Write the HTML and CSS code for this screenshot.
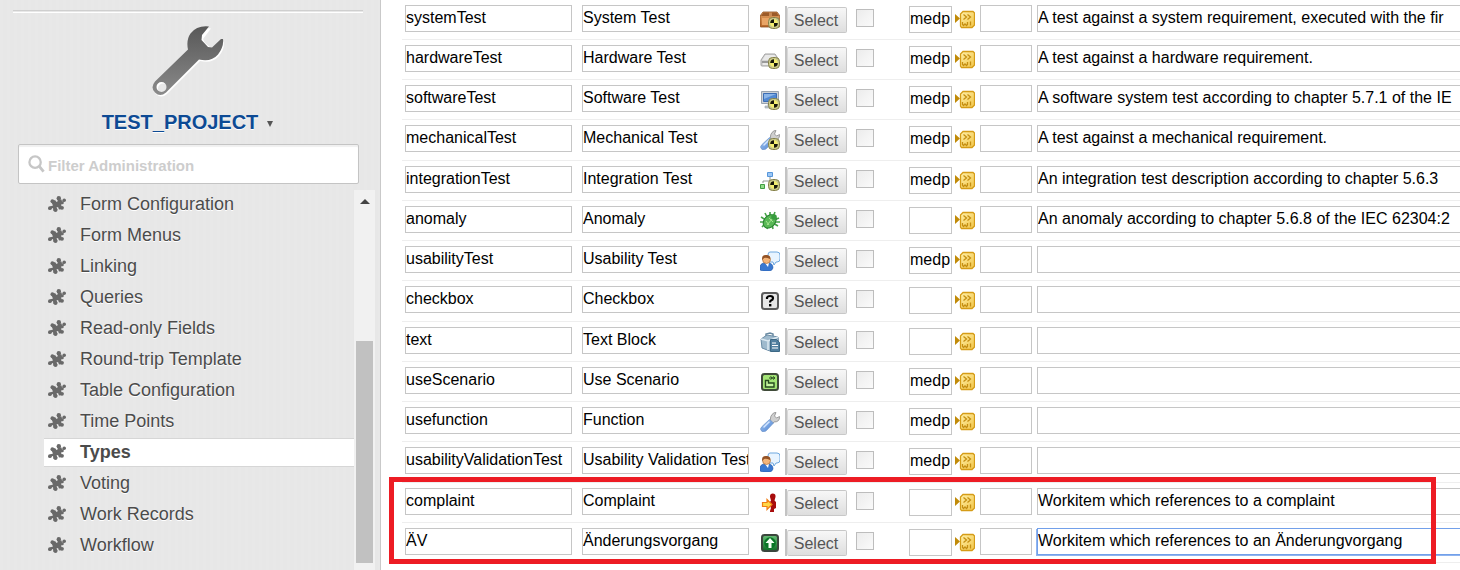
FILE: index.html
```html
<!DOCTYPE html>
<html lang="en">
<head>
<meta charset="utf-8">
<title>Types - TEST_PROJECT</title>
<link rel="stylesheet" href="styles.css">
</head>
<body>
<svg class="defs" aria-hidden="true">
  <defs>
    <linearGradient id="gWrench" x1="0" y1="0" x2="0" y2="1"><stop offset="0" stop-color="#585858"/><stop offset="1" stop-color="#8a8a8a"/></linearGradient>
    <linearGradient id="gGold" x1="0" y1="0" x2="1" y2="1"><stop offset="0" stop-color="#fff0a8"/><stop offset="1" stop-color="#f2c548"/></linearGradient>
    <linearGradient id="gBlue" x1="0" y1="0" x2="1" y2="1"><stop offset="0" stop-color="#a9ccf5"/><stop offset="1" stop-color="#4a7fd0"/></linearGradient>
    <linearGradient id="gBox" x1="0" y1="0" x2="0" y2="1"><stop offset="0" stop-color="#e2a061"/><stop offset="1" stop-color="#b8682a"/></linearGradient>
    <linearGradient id="gGreen" x1="0" y1="0" x2="0" y2="1"><stop offset="0" stop-color="#6cc07a"/><stop offset="1" stop-color="#0d6b25"/></linearGradient>
    <symbol id="puzzle" viewBox="0 0 18 16">
      <g fill="#696969">
        <path d="M3 5.500 7 4 8.500 6 10 5 9 3.500 13.500 3.500 14 5.500 16 4.500 15.500 8 13 8.500 14.500 13 11 13.500 10 11 8.500 11.500 9.500 14 5.500 15 5 12 2 13 2 10.500 5 9.500z"/>
        <circle cx="1.900" cy="12.200" r="1.900"/><circle cx="16.200" cy="4.200" r="1.800"/><circle cx="10.800" cy="2.300" r="2.200"/><circle cx="4.400" cy="5.200" r="1.900"/><circle cx="7.500" cy="14" r="2"/><circle cx="14" cy="11.800" r="1.900"/>
      </g>
    </symbol>
    <symbol id="badge" viewBox="0 0 12 12">
      <rect x=".5" y=".5" width="11" height="11" rx="4" fill="#c9c88c" stroke="#85814a"/>
      <circle cx="6" cy="6" r="3.800" fill="#f4ef70"/>
      <path d="M6 6V2.200A3.800 3.800 0 0 0 2.200 6zM6 6v3.800A3.800 3.800 0 0 0 9.800 6z" fill="#16160c"/>
    </symbol>
    <symbol id="system" viewBox="0 0 20 20">
      <path d="M3 2h14l3 4v10q0 1-1 1H1q-1 0-1-1V6z" fill="url(#gBox)" stroke="#8c4c1c" stroke-width=".8"/>
      <path d="M1 6 3.500 2.500h13L19 6z" fill="#9c5b29"/><path d="M2 8h9v7H2z" fill="#e9a566"/><path d="M9 2.500h3V6H9z" fill="#c98a55"/>
      <use href="#badge" x="8" y="7" width="12" height="12"/>
    </symbol>
    <symbol id="hardware" viewBox="0 0 20 20">
      <path d="M5 4h10l4 6v5q0 1-1 1H2q-1 0-1-1v-5z" fill="#d4d4d4" stroke="#a2a2a2"/>
      <path d="M5.500 5h9l3 5h-15z" fill="#e9e9e9"/><path d="M2 11h10v2H2z" fill="#9a9a9a"/><path d="M3 14h7" stroke="#fff"/>
      <use href="#badge" x="8" y="7" width="12" height="12"/>
    </symbol>
    <symbol id="software" viewBox="0 0 20 20">
      <path d="M1.500 1.500h17v12h-17z" fill="#cdd2d8" stroke="#9aa4b0"/><path d="M3.500 3.500h13v8h-13z" fill="#5289d2" stroke="#3c6db4"/>
      <path d="M4 4h12L4 9z" fill="#8bb5e8"/><path d="M8 14h4v2h2v2H5v-2h3z" fill="#bcc3cb" stroke="#98a1ab" stroke-width=".6"/>
      <use href="#badge" x="8" y="8" width="12" height="12"/>
    </symbol>
    <symbol id="wrench" viewBox="0 0 20 20">
      <path d="M11 10Q9 4 14 .800L16 .500 14.500 4 16.500 6 19.500 4.500Q20 10 14 10L12 12z" fill="#cfcfcf" stroke="#8a8a8a" stroke-width=".8"/>
      <path d="m9.500 7.500 4 3.500-7 7.500q-2 2-4.500 1-3-2.500 0-5z" fill="url(#gBlue)" stroke="#7398cb" stroke-width=".7"/>
      <path d="m4 15 5-5" stroke="#d4e6ff" stroke-width="1.500" stroke-linecap="round"/>
    </symbol>
    <symbol id="mechanical" viewBox="0 0 20 20">
      <use href="#wrench" width="20" height="20"/><use href="#badge" x="8" y="8" width="12" height="12"/>
    </symbol>
    <symbol id="integration" viewBox="0 0 20 20">
      <path d="M10 6v4M3 12v-2h10" fill="none" stroke="#8f9691"/>
      <path d="M7.500 1.500h5v4h-5z" fill="#9bc6f5" stroke="#5796da"/><path d="M.500 13.500h4v4h-4z" fill="#92db89" stroke="#409e43"/>
      <use href="#badge" x="8" y="8" width="12" height="12"/>
    </symbol>
    <symbol id="bug" viewBox="0 0 20 20">
      <path d="M5 2 7 6M10 1v5M15 1l-2 5M1 6l5 3M0 11h6M2 16l4-4M19 7l-5 2M20 11h-6M18 15l-5-3M7 18l1-4M13 18l-1-5" fill="none" stroke="#45a347" stroke-width="1.600"/>
      <ellipse cx="10" cy="10.500" rx="5.500" ry="7.500" transform="rotate(42 10 10)" fill="#58b855" stroke="#26822f"/>
      <path d="m7 14 6-7M6 10l3 4M9 7l4 4" stroke="#a5e390" fill="none"/><circle cx="14" cy="6" r="2.800" fill="#379c3d"/>
    </symbol>
    <symbol id="user" viewBox="0 0 20 20">
      <path d="M10 1h7q3 0 3 3v4q0 3-3 3h-1l-2 3-1-3h-3q-2 0-2-3V4q0-3 2-3z" fill="#e8f4ff" stroke="#6fa8df"/>
      <path d="M0 19q-1-7 5-7h3q5 0 5 5-1 3-4 3H3z" fill="#3978d0" stroke="#2459a9" stroke-width=".6"/>
      <path d="M5 12h4l-1 4z" fill="#fff"/><circle cx="6.500" cy="8.500" r="4" fill="#f4b579" stroke="#9b5c2c" stroke-width=".6"/>
      <path d="M2.300 9Q1 3.500 7 4q4 1 3 4-4-2-6-1z" fill="#945326"/>
    </symbol>
    <symbol id="question" viewBox="0 0 20 20">
      <rect x="2" y="2" width="16" height="16" rx="2.500" fill="#e7e7e7" stroke="#5c5c5c" stroke-width="2"/>
      <path d="M7 8V6.500Q8 5 10 5q3 0 3 2.200 0 1.500-2 2.300-1 .5-1 2" fill="none" stroke="#000" stroke-width="2.200"/><path d="M9 13h2.400v2.400H9z"/>
    </symbol>
    <symbol id="textblock" viewBox="0 0 20 20">
      <path d="M6 4V2l4-1 3 1v3" fill="none" stroke="#6889a1" stroke-width="1.500"/>
      <path d="m1 7 6-4 11 2 1 8-9 6-8-3z" fill="#9fbacd" stroke="#6b8da6"/><path d="m1 7 7 2 10-4M8 9v9" fill="none" stroke="#dce9f1" stroke-width="1.500"/>
      <path d="M10.500 7.500h6l3 3v9h-9z" fill="#517f9f" stroke="#3d6885"/><path d="M12 11h4M12 13.500h6M12 16h6" stroke="#fff"/>
    </symbol>
    <symbol id="scenario" viewBox="0 0 20 20">
      <rect x="2" y="2" width="16" height="16" rx="2.500" fill="#a4e576" stroke="#3f4b39" stroke-width="2"/>
      <path d="M5.500 15V8.500h3V11H14v4z" fill="#c7f6a0" stroke="#264b1f" stroke-width="1.400"/><path d="M9 6h5M10.500 4.500l2 1.500-2 1.500M13 4.500 15 6l-2 1.500" fill="none" stroke="#264b1f"/>
    </symbol>
    <symbol id="complaint" viewBox="0 0 20 20">
      <path d="M10 4q-.3-3.500 2.800-3.500T15.500 4L14.500 7.500 16 9v6l-2 1v3h-4v-1l1-3-1-2V9l1-1.500z" fill="#a80d0d"/>
      <path d="M2.500 9.500H7v-3l5 5-5 5v-3H2.500z" fill="#ffd746" stroke="#f07e16" stroke-width="1.200"/>
    </symbol>
    <symbol id="change" viewBox="0 0 20 20">
      <rect x="2" y="2" width="16" height="16" rx="2.500" fill="url(#gGreen)" stroke="#3b463d" stroke-width="2"/>
      <circle cx="10" cy="10" r="5.800" fill="#087526"/><path d="M10 5 5.500 10H8.500v5h3v-5h3z" fill="#f4fff4"/>
    </symbol>
    <symbol id="wi" viewBox="0 0 20 20">
      <path d="M0 4 5 8.500 0 13z" fill="#c18a07"/>
      <path d="M8 1.500h10l1.500 1.500v12L17 17.500H6.500L5.500 16V4z" fill="url(#gGold)" stroke="#d59c17" stroke-width="1.300"/>
      <path d="m8.500 4.500 3 2.500-3 2.500M12.500 4.500l3 2.500-3 2.500" fill="none" stroke="#c58f13" stroke-width="1.300"/>
      <path d="M7.500 12v2.500l1 1 1.500-1.500 1.500 1.500 1-1V12M15.500 11.500v4" fill="none" stroke="#c58f13" stroke-width="1.300"/>
    </symbol>
  </defs>
</svg>

<div class="layout">
  <aside class="sidebar">
    <div class="divider"></div>
    <svg class="project-icon" viewBox="0 0 72 72" aria-hidden="true">
      <path d="M58 1.500Q46-.500 39 8q-5 6-3 15.500L3 56q-5 6 0 11t11 0L47 34q12 3 19-5 7-9 4-15.500L60 22.500 52 16 50 12zM10 56.500a5 5 0 1 1 0 10 5 5 0 0 1 0-10z" fill="#fff" transform="translate(1 1)"/>
      <path d="M57 .500Q45-.800 38.500 7.500 34 14 36 23.500L3 55.500q-5 6 0 11t11 0L47 33.500q12 3 19-5 6-8 5-15.500L69 13 60 21.500 56 21 49.500 14 50 9zM9.500 56a5 5 0 1 1 0 10 5 5 0 0 1 0-10z" fill="url(#gWrench)" fill-rule="evenodd"/>
    </svg>
    <button class="project" type="button">TEST_PROJECT <span class="caret"></span></button>
    <label class="search">
      <svg viewBox="0 0 18 20" aria-hidden="true"><circle cx="7.500" cy="7.500" r="6" fill="none" stroke="#c6c6c6" stroke-width="2.400"/><path d="m12 12 4.500 5.500" stroke="#c6c6c6" stroke-width="3"/></svg>
      <input type="text" placeholder="Filter Administration" aria-label="Filter Administration">
    </label>
    <div class="scroller">
      <nav class="menu">
        <a href="#"><svg><use href="#puzzle"/></svg>Form Configuration</a>
        <a href="#"><svg><use href="#puzzle"/></svg>Form Menus</a>
        <a href="#"><svg><use href="#puzzle"/></svg>Linking</a>
        <a href="#"><svg><use href="#puzzle"/></svg>Queries</a>
        <a href="#"><svg><use href="#puzzle"/></svg>Read-only Fields</a>
        <a href="#"><svg><use href="#puzzle"/></svg>Round-trip Template</a>
        <a href="#"><svg><use href="#puzzle"/></svg>Table Configuration</a>
        <a href="#"><svg><use href="#puzzle"/></svg>Time Points</a>
        <a href="#" class="active" aria-current="page"><svg><use href="#puzzle"/></svg>Types</a>
        <a href="#"><svg><use href="#puzzle"/></svg>Voting</a>
        <a href="#"><svg><use href="#puzzle"/></svg>Work Records</a>
        <a href="#"><svg><use href="#puzzle"/></svg>Workflow</a>
      </nav>
      <div class="track"><span class="up"></span><span class="thumb"></span></div>
    </div>
  </aside>

  <main class="content">
    <table class="types">
      <colgroup><col class="c-id"><col class="c-name"><col class="c-icon"><col class="c-check"><col class="c-prefix"><col class="c-color"><col></colgroup>
      <tbody>
        <tr><td><input aria-label="ID" value="systemTest"></td><td><input aria-label="Name" value="System Test"></td><td><div class="pick"><svg><use href="#system"/></svg><span><button type="button">Select</button></span></div></td><td><input type="checkbox" aria-label="Default"></td><td><div class="prefix"><input aria-label="Fields" value="medp"><svg><use href="#wi"/></svg></div></td><td><input aria-label="Color"></td><td><input aria-label="Description" value="A test against a system requirement, executed with the fir"></td></tr>
        <tr><td><input aria-label="ID" value="hardwareTest"></td><td><input aria-label="Name" value="Hardware Test"></td><td><div class="pick"><svg><use href="#hardware"/></svg><span><button type="button">Select</button></span></div></td><td><input type="checkbox" aria-label="Default"></td><td><div class="prefix"><input aria-label="Fields" value="medp"><svg><use href="#wi"/></svg></div></td><td><input aria-label="Color"></td><td><input aria-label="Description" value="A test against a hardware requirement."></td></tr>
        <tr><td><input aria-label="ID" value="softwareTest"></td><td><input aria-label="Name" value="Software Test"></td><td><div class="pick"><svg><use href="#software"/></svg><span><button type="button">Select</button></span></div></td><td><input type="checkbox" aria-label="Default"></td><td><div class="prefix"><input aria-label="Fields" value="medp"><svg><use href="#wi"/></svg></div></td><td><input aria-label="Color"></td><td><input aria-label="Description" value="A software system test according to chapter 5.7.1 of the IE"></td></tr>
        <tr><td><input aria-label="ID" value="mechanicalTest"></td><td><input aria-label="Name" value="Mechanical Test"></td><td><div class="pick"><svg><use href="#mechanical"/></svg><span><button type="button">Select</button></span></div></td><td><input type="checkbox" aria-label="Default"></td><td><div class="prefix"><input aria-label="Fields" value="medp"><svg><use href="#wi"/></svg></div></td><td><input aria-label="Color"></td><td><input aria-label="Description" value="A test against a mechanical requirement."></td></tr>
        <tr><td><input aria-label="ID" value="integrationTest"></td><td><input aria-label="Name" value="Integration Test"></td><td><div class="pick"><svg><use href="#integration"/></svg><span><button type="button">Select</button></span></div></td><td><input type="checkbox" aria-label="Default"></td><td><div class="prefix"><input aria-label="Fields" value="medp"><svg><use href="#wi"/></svg></div></td><td><input aria-label="Color"></td><td><input aria-label="Description" value="An integration test description according to chapter 5.6.3"></td></tr>
        <tr><td><input aria-label="ID" value="anomaly"></td><td><input aria-label="Name" value="Anomaly"></td><td><div class="pick"><svg><use href="#bug"/></svg><span><button type="button">Select</button></span></div></td><td><input type="checkbox" aria-label="Default"></td><td><div class="prefix"><input aria-label="Fields"><svg><use href="#wi"/></svg></div></td><td><input aria-label="Color"></td><td><input aria-label="Description" value="An anomaly according to chapter 5.6.8 of the IEC 62304:2"></td></tr>
        <tr><td><input aria-label="ID" value="usabilityTest"></td><td><input aria-label="Name" value="Usability Test"></td><td><div class="pick"><svg><use href="#user"/></svg><span><button type="button">Select</button></span></div></td><td><input type="checkbox" aria-label="Default"></td><td><div class="prefix"><input aria-label="Fields" value="medp"><svg><use href="#wi"/></svg></div></td><td><input aria-label="Color"></td><td><input aria-label="Description"></td></tr>
        <tr><td><input aria-label="ID" value="checkbox"></td><td><input aria-label="Name" value="Checkbox"></td><td><div class="pick"><svg><use href="#question"/></svg><span><button type="button">Select</button></span></div></td><td><input type="checkbox" aria-label="Default"></td><td><div class="prefix"><input aria-label="Fields"><svg><use href="#wi"/></svg></div></td><td><input aria-label="Color"></td><td><input aria-label="Description"></td></tr>
        <tr><td><input aria-label="ID" value="text"></td><td><input aria-label="Name" value="Text Block"></td><td><div class="pick"><svg><use href="#textblock"/></svg><span><button type="button">Select</button></span></div></td><td><input type="checkbox" aria-label="Default"></td><td><div class="prefix"><input aria-label="Fields"><svg><use href="#wi"/></svg></div></td><td><input aria-label="Color"></td><td><input aria-label="Description"></td></tr>
        <tr><td><input aria-label="ID" value="useScenario"></td><td><input aria-label="Name" value="Use Scenario"></td><td><div class="pick"><svg><use href="#scenario"/></svg><span><button type="button">Select</button></span></div></td><td><input type="checkbox" aria-label="Default"></td><td><div class="prefix"><input aria-label="Fields" value="medp"><svg><use href="#wi"/></svg></div></td><td><input aria-label="Color"></td><td><input aria-label="Description"></td></tr>
        <tr><td><input aria-label="ID" value="usefunction"></td><td><input aria-label="Name" value="Function"></td><td><div class="pick"><svg><use href="#wrench"/></svg><span><button type="button">Select</button></span></div></td><td><input type="checkbox" aria-label="Default"></td><td><div class="prefix"><input aria-label="Fields" value="medp"><svg><use href="#wi"/></svg></div></td><td><input aria-label="Color"></td><td><input aria-label="Description"></td></tr>
        <tr><td><input aria-label="ID" value="usabilityValidationTest"></td><td><input aria-label="Name" value="Usability Validation Test"></td><td><div class="pick"><svg><use href="#user"/></svg><span><button type="button">Select</button></span></div></td><td><input type="checkbox" aria-label="Default"></td><td><div class="prefix"><input aria-label="Fields" value="medp"><svg><use href="#wi"/></svg></div></td><td><input aria-label="Color"></td><td><input aria-label="Description"></td></tr>
        <tr><td><input aria-label="ID" value="complaint"></td><td><input aria-label="Name" value="Complaint"></td><td><div class="pick"><svg><use href="#complaint"/></svg><span><button type="button">Select</button></span></div></td><td><input type="checkbox" aria-label="Default"></td><td><div class="prefix"><input aria-label="Fields"><svg><use href="#wi"/></svg></div></td><td><input aria-label="Color"></td><td><input aria-label="Description" value="Workitem which references to a complaint"></td></tr>
        <tr><td><input aria-label="ID" value="ÄV"></td><td><input aria-label="Name" value="Änderungsvorgang"></td><td><div class="pick"><svg><use href="#change"/></svg><span><button type="button">Select</button></span></div></td><td><input type="checkbox" aria-label="Default"></td><td><div class="prefix"><input aria-label="Fields"><svg><use href="#wi"/></svg></div></td><td><input aria-label="Color"></td><td><input class="focused" aria-label="Description" value="Workitem which references to an Änderungvorgang"></td></tr>
      </tbody>
    </table>
    <div class="highlight"></div>
  </main>
</div>
</body>
</html>
```
FILE: styles.css
```css
* { box-sizing: border-box; }
body {
  margin: 0;
  background: #fff;
  color: #000;
  font: 16px/20px "Liberation Sans", Arial, sans-serif;
}
input, button { font: inherit; margin: 0; }
.defs { position: absolute; width: 0; height: 0; }

.layout { display: flex; height: 100vh; overflow: hidden; }

/* Sidebar */
.sidebar {
  flex: none;
  width: 381px;
  display: flex;
  flex-direction: column;
  align-items: center;
  padding: 10px 5px 0 0;
  border-right: 1px solid #c9c9c9;
  background:
    repeating-linear-gradient(90deg, rgba(255,255,255,.06) 0 3px, transparent 3px 7px),
    #e7e7e7;
}
.divider {
  flex: none;
  align-self: stretch;
  height: 3px;
  margin: 0 12px 0 13px;
  border-top: 1px solid #cfcfcf;
  border-bottom: 1px solid #fff;
}
.project-icon { flex: none; width: 72px; height: 72px; margin: 13px 0 12px; }
.project {
  display: flex;
  align-items: center;
  gap: 9px;
  padding: 0;
  border: 0;
  background: none;
  color: #0d4a94;
  font-size: 20px;
  line-height: 24px;
  font-weight: bold;
  text-shadow: 0 1px 0 #fff;
}
.caret {
  border: 3px solid transparent;
  border-top: 6px solid #555;
  border-bottom: 0;
  margin-top: 4px;
}
.search {
  flex: none;
  align-self: stretch;
  display: flex;
  align-items: center;
  gap: 3px;
  height: 40px;
  margin: 10px 16px 6px 18px;
  padding: 0 9px;
  border: 1px solid #c4c4c4;
  border-radius: 2px;
  background: #fff;
  box-shadow: inset 0 2px 1px #f0f0f0;
}
.search svg { flex: none; width: 17px; height: 19px; }
.search input {
  flex: 1;
  min-width: 0;
  padding: 3px 0 0;
  border: 0;
  outline: 0;
  background: none;
  font-size: 15px;
  font-weight: bold;
}
.search input::placeholder { color: #cdcdcd; opacity: 1; }

.scroller { flex: 1; min-height: 0; align-self: stretch; display: flex; }
.menu { flex: 1; display: flex; flex-direction: column; gap: 2px; margin-left: 44px; }
.menu a {
  display: flex;
  align-items: center;
  gap: 14px;
  height: 29px;
  padding: 0 4px 2px;
  border: solid transparent;
  border-width: 1px 0;
  color: #4b4b4b;
  font-size: 18px;
  text-decoration: none;
  text-shadow: 0 1px 0 #fff;
}
.menu svg { width: 18px; height: 16px; }
.menu .active { background: #fff; border-color: #d6d6d6; font-weight: bold; }
.track {
  width: 21px;
  display: flex;
  flex-direction: column;
  align-items: center;
  justify-content: space-between;
  padding: 9px 0 7px;
  background: #f1f1f1;
}
.up { border: 5px solid transparent; border-bottom-color: #444; border-top: 0; }
.thumb { width: 17px; height: 222px; background: #c1c1c1; }

/* Table of types */
.content { position: relative; flex: 1; min-width: 0; padding-left: 21px; overflow: hidden; }
.types {
  width: calc(100% + 120px);
  table-layout: fixed;
  border-collapse: separate;
  border-spacing: 0;
}
.c-id, .c-name { width: 177px; }
.c-icon { width: 97px; }
.c-check { width: 53px; }
.c-prefix { width: 71px; }
.c-color { width: 57px; }
.types tr { height: 40px; }
.types tr:nth-child(4n) { height: 41px; }
.types td {
  padding: 5px 3px 0;
  border-bottom: 1px solid #eee;
  vertical-align: top;
}
.types input {
  display: block;
  width: 100%;
  height: 27px;
  padding: 0 0 1px;
  border: 1px solid #c6c6c6;
  border-radius: 0;
  outline: 0;
  background: #fff;
  color: #000;
}
.types td:nth-child(-n+2) input { width: 167px; }
.types td:nth-child(6) input { width: 52px; }
.types td:nth-child(3) { padding-left: 4px; }
.types .focused { border-color: #72a0ea; box-shadow: -1px 1px 0 #8fb4ef; }
.types input[type="checkbox"] {
  appearance: none;
  width: 18px;
  height: 18px;
  margin-top: 4px;
  border: 1px solid #bdbdbd;
  background: linear-gradient(135deg, #ececec, #fafafa);
}
.pick, .prefix { display: flex; }
.pick svg, .prefix svg { flex: none; width: 20px; height: 20px; margin-top: 5px; }
.pick { gap: 5px; }
.pick span { margin-top: 1px; border-left: 2px solid #c3c3c3; }
.pick button {
  display: block;
  width: 60px;
  height: 26px;
  margin-top: 1px;
  padding: 1px 2px 0 0;
  border: 1px solid #c8c8c8;
  border-left-color: #d8d8d8;
  border-radius: 2px;
  background: linear-gradient(#f7f7f7, #dedede);
  color: #555;
}
.prefix { gap: 3px; }
.prefix input { width: 43px; margin-top: 1px; }

.highlight {
  position: absolute;
  top: 477px;
  left: 8px;
  right: 24px;
  height: 87px;
  border: 5px solid #ed1c24;
  pointer-events: none;
}
```
